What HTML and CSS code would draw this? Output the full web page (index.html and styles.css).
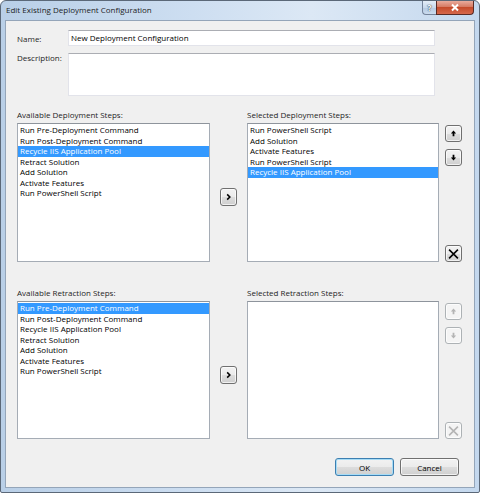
FILE: index.html
```html
<!DOCTYPE html>
<html lang="en">
<head>
  <meta charset="UTF-8">
  <meta name="viewport" content="width=device-width, initial-scale=1.0">
  <title>Edit Existing Deployment Configuration</title>
  <link rel="stylesheet" href="styles.css">
</head>
<body>
  <div class="window">
    <div class="titlebar">
      <span class="title">Edit Existing Deployment Configuration</span>
      <div class="caption-buttons">
        <span class="cap help">?</span>
        <span class="cap close">
          <svg width="12" height="9" viewBox="0 0 12 9"><path d="M3 1.5 L9 7.5 M9 1.5 L3 7.5" stroke="#fff" stroke-width="2" fill="none"/></svg>
        </span>
      </div>
    </div>

    <div class="client">
      <div class="fields">
        <label class="label-name">Name:</label>
        <div class="textbox">New Deployment Configuration</div>
        <label class="label-desc">Description:</label>
        <div class="textbox multi"></div>
      </div>

      <!-- Deployment steps -->
      <div class="steps deploy">
        <div class="caption left">Available Deployment Steps:</div>
        <div class="caption right">Selected Deployment Steps:</div>
        <ul class="listbox">
          <li>Run Pre-Deployment Command</li>
          <li>Run Post-Deployment Command</li>
          <li class="selected">Recycle IIS Application Pool</li>
          <li>Retract Solution</li>
          <li>Add Solution</li>
          <li>Activate Features</li>
          <li>Run PowerShell Script</li>
        </ul>
        <div class="mover">
          <button class="btn small"><svg width="17" height="18" viewBox="0 0 17 18"><path d="M7 6 L10 9 L7 12" stroke="#000" stroke-width="1.8" fill="none"/></svg></button>
        </div>
        <ul class="listbox">
          <li>Run PowerShell Script</li>
          <li>Add Solution</li>
          <li>Activate Features</li>
          <li>Run PowerShell Script</li>
          <li class="selected">Recycle IIS Application Pool</li>
        </ul>
        <div class="order">
          <button class="btn small"><svg width="17" height="17" viewBox="0 0 17 17"><polygon points="8.5,5 11.5,8.5 9.5,8.5 9.5,11.5 7.5,11.5 7.5,8.5 5.5,8.5" fill="#000"/></svg></button>
          <button class="btn small"><svg width="17" height="17" viewBox="0 0 17 17"><polygon points="8.5,12 11.5,8.5 9.5,8.5 9.5,5.5 7.5,5.5 7.5,8.5 5.5,8.5" fill="#000"/></svg></button>
          <button class="btn small remove"><svg width="17" height="18" viewBox="0 0 17 18"><path d="M3.5 4 L13.5 14 M13.5 4 L3.5 14" stroke="#000" stroke-width="1.8" fill="none"/></svg></button>
        </div>
      </div>

      <!-- Retraction steps -->
      <div class="steps retract">
        <div class="caption left">Available Retraction Steps:</div>
        <div class="caption right">Selected Retraction Steps:</div>
        <ul class="listbox">
          <li class="selected">Run Pre-Deployment Command</li>
          <li>Run Post-Deployment Command</li>
          <li>Recycle IIS Application Pool</li>
          <li>Retract Solution</li>
          <li>Add Solution</li>
          <li>Activate Features</li>
          <li>Run PowerShell Script</li>
        </ul>
        <div class="mover">
          <button class="btn small"><svg width="17" height="18" viewBox="0 0 17 18"><path d="M7 6 L10 9 L7 12" stroke="#000" stroke-width="1.8" fill="none"/></svg></button>
        </div>
        <ul class="listbox"></ul>
        <div class="order">
          <button class="btn small disabled"><svg width="17" height="17" viewBox="0 0 17 17"><polygon points="8.5,5 11.5,8.5 9.5,8.5 9.5,11.5 7.5,11.5 7.5,8.5 5.5,8.5" fill="#b4b4b4"/></svg></button>
          <button class="btn small disabled"><svg width="17" height="17" viewBox="0 0 17 17"><polygon points="8.5,12 11.5,8.5 9.5,8.5 9.5,5.5 7.5,5.5 7.5,8.5 5.5,8.5" fill="#b4b4b4"/></svg></button>
          <button class="btn small remove disabled"><svg width="17" height="18" viewBox="0 0 17 18"><path d="M3.5 4 L13.5 14 M13.5 4 L3.5 14" stroke="#b4b4b4" stroke-width="1.8" fill="none"/></svg></button>
        </div>
      </div>

      <div class="footer">
        <button class="btn wide default">OK</button>
        <button class="btn wide">Cancel</button>
      </div>
    </div>
  </div>
</body>
</html>
```

FILE: styles.css
```css
/* General Styles */
body {
  margin: 0;
  background: #fff;
  font-family: "Open Sans", sans-serif;
  font-size: 8px;
  color: #000;
}

/* Window frame */
.window {
  width: 480px;
  height: 493px;
  box-sizing: border-box;
  border: 1px solid #5b6878;
  border-radius: 6px 6px 2px 2px;
  padding: 0 4px 4px;
  background: linear-gradient(to right, #b9cfe7, #cddef1 40%, #dce8f5 65%, #c4d8ee);
  display: flex;
  flex-direction: column;
}

.titlebar {
  height: 19px;
  display: flex;
  justify-content: space-between;
  align-items: flex-start;
}

.title {
  padding: 3px 0 0 1px;
  line-height: 12px;
  color: #1e1e1e;
}

.caption-buttons {
  display: flex;
  margin-right: 1px;
}

.cap {
  box-sizing: border-box;
  height: 14px;
  display: flex;
  align-items: center;
  justify-content: center;
}

.help {
  width: 14px;
  border: 1px solid #74839a;
  border-top: none;
  border-right: none;
  border-radius: 0 0 0 4px;
  background: linear-gradient(#e4edf7, #c9d9ec 50%, #b5c9e1 51%, #cbdcef);
  color: #fff;
  font-weight: 700;
  font-size: 9px;
  text-shadow: 0 0 1px #2d3a4c, 0 0 1px #2d3a4c;
}

.close {
  width: 38px;
  border: 1px solid #5a2b25;
  border-top: none;
  border-radius: 0 0 4px 0;
  background: linear-gradient(#e9ab9c, #d67a63 45%, #c54b2b 50%, #d5684c);
}

/* Client area */
.client {
  flex: 1;
  box-sizing: border-box;
  border: 1px solid #94a5b9;
  background: #f0f0f0;
  padding: 9px 0 0 11px;
}

.fields {
  display: grid;
  grid-template-columns: 51px 367px;
  grid-template-rows: 16px 43px;
  row-gap: 7px;
}

.fields label {
  line-height: 12px;
  color: #1e1e1e;
}

.label-name {
  padding-top: 3px;
}

.label-desc {
  margin-top: -1px;
}

.textbox {
  box-sizing: border-box;
  background: #fff;
  border: 1px solid #e2e3ea;
  border-top-color: #abadb3;
  padding: 0 2px;
  line-height: 14px;
}

/* Step lists */
.steps {
  display: grid;
  grid-template-columns: 193px 37px 192px 23px;
  row-gap: 2px;
}

.steps > * {
  grid-row: 2;
}

.deploy {
  margin-top: 13px;
  grid-template-rows: 12px 139px;
}

.retract {
  margin-top: 25px;
  grid-template-rows: 12px 138px;
}

.caption {
  line-height: 12px;
  color: #1e1e1e;
}

.steps > .caption {
  grid-row: 1;
}

.caption.left {
  grid-column: 1;
}

.caption.right {
  grid-column: 3;
}

.listbox {
  margin: 0;
  padding: 1px 0 0;
  list-style: none;
  background: #fff;
  border: 1px solid #a5acb5;
  border-top-color: #8e949c;
}

.listbox li {
  line-height: 10.5px;
  padding-left: 2px;
  white-space: nowrap;
}

.listbox li.selected {
  background: #3399ff;
  color: #fff;
}

.mover {
  display: flex;
  justify-content: center;
  align-items: flex-start;
  padding-top: 65px;
}

.order {
  display: flex;
  flex-direction: column;
  align-items: flex-end;
  gap: 7px;
  padding-top: 2px;
}

.order .remove {
  margin-top: auto;
  height: 18px;
}

/* Buttons */
.btn {
  box-sizing: border-box;
  border: 1px solid #707070;
  border-radius: 3px;
  background: linear-gradient(#f2f2f2, #ebebeb 50%, #dddddd 50%, #cfcfcf);
  box-shadow: inset 0 0 0 1px rgba(255, 255, 255, 0.7);
  padding: 0;
  display: flex;
  align-items: center;
  justify-content: center;
  font-family: inherit;
  font-size: 8px;
  color: #000;
}

.btn.small {
  width: 17px;
  height: 17px;
}

.mover .btn.small {
  height: 18px;
}

.btn.disabled {
  border-color: #adb2b5;
  background: #f4f4f4;
}

.btn.wide {
  width: 59px;
  height: 18px;
}

.btn.default {
  border-color: #3c7fb1;
  box-shadow: inset 0 0 0 1px #a7dcf6;
}

.footer {
  width: 445px;
  box-sizing: border-box;
  margin-top: 19px;
  padding-right: 3px;
  display: flex;
  justify-content: flex-end;
  gap: 6px;
}
```
